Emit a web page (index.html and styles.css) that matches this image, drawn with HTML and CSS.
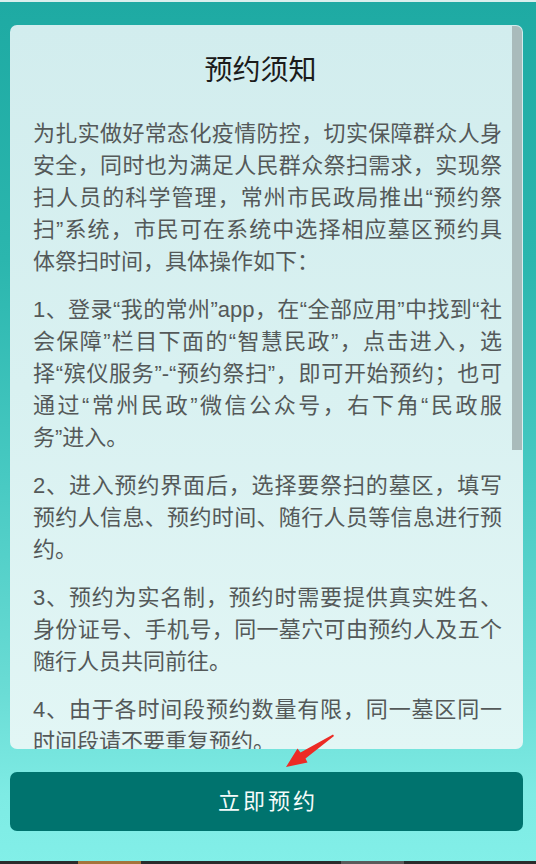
FILE: index.html
```html
<!DOCTYPE html>
<html lang="zh-CN">
<head>
<meta charset="utf-8">
<title>预约须知</title>
<link rel="stylesheet" href="styles.css">
</head>
<body>
<div class="page">
  <div class="topline"></div>
  <section class="card">
    <div class="card-body">
      <h1 class="title">预约须知</h1>
      <p>为扎实做好常态化疫情防控，切实保障群众人身安全，同时也为满足人民群众祭扫需求，实现祭扫人员的科学管理，常州市民政局推出“预约祭扫”系统，市民可在系统中选择相应墓区预约具体祭扫时间，具体操作如下：</p>
      <p class="lines"><span>1、登录“我的常州”app，在“全部应用”中找到“社</span><span>会保障”栏目下面的“智慧民政”，点击进入，选</span><span>择“殡仪服务”-“预约祭扫”，即可开始预约；也可</span><span>通过“常州民政”微信公众号，右下角“民政服</span><span class="last">务”进入。</span></p>
      <p>2、进入预约界面后，选择要祭扫的墓区，填写预约人信息、预约时间、随行人员等信息进行预约。</p>
      <p>3、预约为实名制，预约时需要提供真实姓名、身份证号、手机号，同一墓穴可由预约人及五个随行人员共同前往。</p>
      <p>4、由于各时间段预约数量有限，同一墓区同一时间段请不要重复预约。</p>
    </div>
    <div class="scroll-thumb"></div>
  </section>
  <button class="btn" type="button"><span class="btn-label">立即预约</span></button>
  <div class="spacer"></div>
  <div class="navstrip">
    <span class="seg seg-brown"></span>
    <span class="seg seg-gray"></span>
  </div>
  <svg class="arrow" width="60" height="40" viewBox="280 730 60 40" aria-hidden="true">
    <polygon points="333,734.5 334,736 305.5,758.5 307.5,762.5 286,767 297.5,748.5 300.5,752.5" fill="#ec2b25"/>
  </svg>
</div>
</body>
</html>
```

FILE: styles.css
```css
* { box-sizing: border-box; }
html, body { margin: 0; padding: 0; }
body {
  width: 536px;
  height: 864px;
  overflow: hidden;
  font-family: "Liberation Sans", "Noto Sans CJK SC", sans-serif;
}
.page {
  position: relative;
  width: 536px;
  height: 864px;
  display: flex;
  flex-direction: column;
  background: linear-gradient(180deg, #1eaaa3 0%, #2bb6ae 30%, #47c9c2 55%, #6adcd5 80%, #7eebe4 92%, #82efe8 100%);
}
.topline {
  height: 2px;
  background: #d9efed;
  flex: none;
}
.card {
  position: relative;
  flex: none;
  height: 724px;
  margin: 23px 13px 0 10px;
  border-radius: 7px;
  overflow: hidden;
  background: linear-gradient(180deg, #d2edee 0%, #d9f1f1 50%, #e2f6f5 100%);
}
.card-body {
  padding: 26px 21px 0 23px;
}
.title {
  margin: 0 14px 0 0;
  text-align: center;
  font-size: 28px;
  line-height: 40px;
  font-weight: normal;
  color: #1b1b1b;
  padding-bottom: 27px;
}
.card-body p {
  margin: 0 0 16px;
  font-size: 22px;
  line-height: 32px;
  color: #545959;
  text-align: justify;
}
.card-body p.lines span {
  display: block;
  text-align: justify;
  text-align-last: justify;
}
.card-body p.lines span.last {
  text-align-last: left;
}
.scroll-thumb {
  position: absolute;
  top: 1px;
  right: 1px;
  width: 10px;
  height: 424px;
  background: #a9bbbb;
  border-top-right-radius: 6px;
}
.btn {
  flex: none;
  height: 59px;
  margin: 23px 13px 0 10px;
  border: 0;
  border-radius: 7px;
  background: #00736e;
  color: #f4fbfa;
  font-family: "Liberation Sans", "Noto Sans CJK SC", sans-serif;
  padding: 0;
  display: flex;
  align-items: center;
  justify-content: center;
}
.btn-label {
  font-size: 22px;
  line-height: 30px;
  letter-spacing: 3px;
  padding-left: 3px;
}
.spacer { flex: 1; }
.navstrip {
  flex: none;
  height: 3px;
  background: #2a2b2b;
  display: flex;
}
.seg { height: 3px; width: 63px; }
.seg-brown { margin-left: 78px; background: #a4743c; }
.seg-gray { margin-left: 200px; background: #5a5a5a; }
.arrow {
  position: absolute;
  left: 280px;
  top: 730px;
}
```
